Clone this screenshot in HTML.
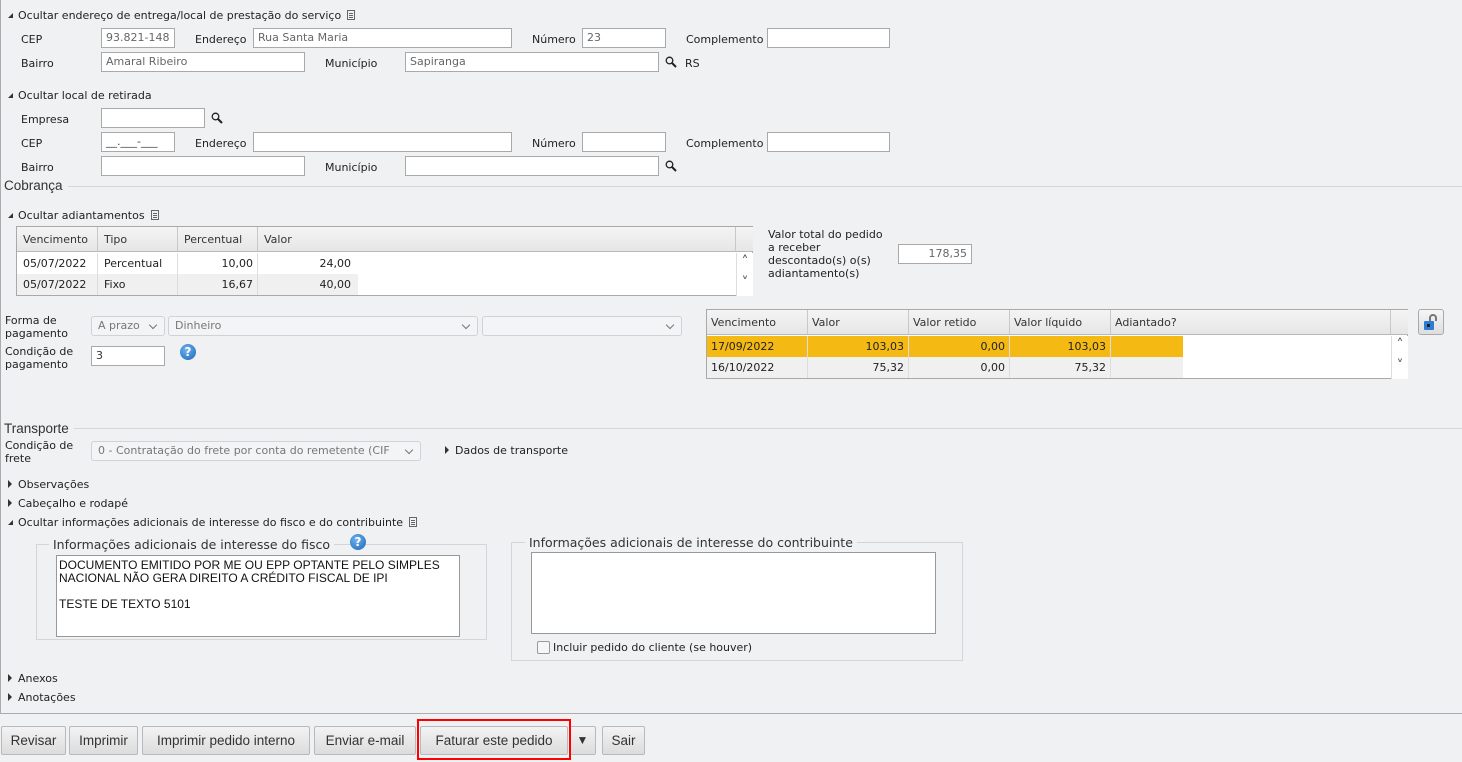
<!DOCTYPE html>
<html><head><meta charset="utf-8">
<style>
*{box-sizing:border-box}
body{margin:0;width:1462px;height:762px;background:#f0f1f3;font-family:"DejaVu Sans","Liberation Sans",sans-serif;font-size:11px;color:#222;position:relative;overflow:hidden}
.a{position:absolute;white-space:nowrap}
.in{position:absolute;height:20px;background:#fff;border:1px solid #a9a9a9;font-size:11px;color:#666;padding:1px 4px;line-height:16px}
.sel{position:absolute;height:20px;border:1px solid #cfd2d6;border-radius:3px;background:#f3f4f5;color:#777;padding:2px 6px;line-height:14px;overflow:hidden;white-space:nowrap}
.sel:after{content:"";position:absolute;right:8px;top:5px;width:5px;height:5px;border-right:1px solid #777;border-bottom:1px solid #777;transform:rotate(45deg);background:#f3f4f5}
.tri{display:inline-block;width:0;height:0;border-left:5px solid transparent;border-bottom:5px solid #333;margin-right:5px;vertical-align:1px}
.rt{display:inline-block;width:0;height:0;border-top:4px solid transparent;border-bottom:4px solid transparent;border-left:4px solid #333;margin-right:6px;vertical-align:0}
.doc{display:inline-block;width:8px;height:10px;border:1px solid #666;margin-left:6px;vertical-align:-1px;background:linear-gradient(#666,#666) 1px 2px/4px 1px no-repeat,linear-gradient(#666,#666) 1px 4px/4px 1px no-repeat,linear-gradient(#666,#666) 1px 6px/4px 1px no-repeat}
.mag{position:absolute;width:12px;height:12px}
.grid{position:absolute;border:1px solid #a9a9a9;background:#fff}
.hd{position:absolute;top:0;height:25px;background:linear-gradient(#f4f4f4,#e6e6e6);border-right:1px solid #c8c8c8;border-bottom:1px solid #b8b8b8;padding:6px 4px;color:#333}
.c{position:absolute;height:21px;padding:4px 4px;border-right:1px solid #ddd}
.r{text-align:right}
.btn{position:absolute;top:726px;height:29px;border:1px solid #b7b9bd;border-radius:2px;background:linear-gradient(#f3f3f3,#dcdcdc);font-family:"Liberation Sans",sans-serif;font-size:13.5px;color:#333;padding:6px 0;line-height:15px;white-space:nowrap;text-align:center}
.hr{position:absolute;height:1px;background:#d5d7da}
.q{position:absolute;width:16px;height:16px;border-radius:50%;background:radial-gradient(circle at 40% 35%,#6fb2ee,#1b65b8);color:#fff;font-weight:bold;font-size:12px;text-align:center;line-height:16px}
.fs{position:absolute;border:1px solid #d3d5d8}
.ta{position:absolute;background:#fff;border:1px solid #999;font-family:"Liberation Sans",sans-serif;font-size:12px;color:#111;padding:3px 2px;line-height:13px}
.sb{position:absolute;width:17px;height:43px;border-left:1px solid #ddd;background:#fff;font-size:14px;color:#555;text-align:center}
</style></head><body>
<div class="a" style="left:0;top:0;width:1px;height:714px;background:#a9adb3"></div>
<div class="a" style="left:0;top:713px;width:1462px;height:1px;background:#a9adb3"></div>

<div class="a" style="left:8px;top:9px"><span class="tri"></span>Ocultar endereço de entrega/local de prestação do serviço<span class="doc"></span></div>
<div class="a" style="left:21px;top:33px">CEP</div><div class="in" style="left:101px;top:28px;width:74px">93.821-148</div>
<div class="a" style="left:195px;top:33px">Endereço</div><div class="in" style="left:253px;top:28px;width:259px">Rua Santa Maria</div>
<div class="a" style="left:532px;top:33px">Número</div><div class="in" style="left:582px;top:28px;width:84px">23</div>
<div class="a" style="left:686px;top:33px">Complemento</div><div class="in" style="left:767px;top:28px;width:123px"></div>
<div class="a" style="left:21px;top:57px">Bairro</div><div class="in" style="left:101px;top:52px;width:204px">Amaral Ribeiro</div>
<div class="a" style="left:325px;top:57px">Município</div><div class="in" style="left:405px;top:52px;width:254px">Sapiranga</div>
<svg class="mag" style="left:665px;top:56px" viewBox="0 0 12 12"><circle cx="4.5" cy="4.5" r="3.3" fill="none" stroke="#222" stroke-width="1.3"/><path d="M7 7l4 4" stroke="#222" stroke-width="2"/></svg>
<div class="a" style="left:685px;top:57px">RS</div>

<div class="a" style="left:8px;top:89px"><span class="tri"></span>Ocultar local de retirada</div>
<div class="a" style="left:21px;top:113px">Empresa</div><div class="in" style="left:101px;top:108px;width:104px"></div>
<svg class="mag" style="left:211px;top:112px" viewBox="0 0 12 12"><circle cx="4.5" cy="4.5" r="3.3" fill="none" stroke="#222" stroke-width="1.3"/><path d="M7 7l4 4" stroke="#222" stroke-width="2"/></svg>
<div class="a" style="left:21px;top:137px">CEP</div><div class="in" style="left:101px;top:132px;width:74px;color:#444">__.___-___</div>
<div class="a" style="left:195px;top:137px">Endereço</div><div class="in" style="left:253px;top:132px;width:259px"></div>
<div class="a" style="left:532px;top:137px">Número</div><div class="in" style="left:582px;top:132px;width:84px"></div>
<div class="a" style="left:686px;top:137px">Complemento</div><div class="in" style="left:767px;top:132px;width:123px"></div>
<div class="a" style="left:21px;top:161px">Bairro</div><div class="in" style="left:101px;top:156px;width:204px"></div>
<div class="a" style="left:325px;top:161px">Município</div><div class="in" style="left:405px;top:156px;width:254px"></div>
<svg class="mag" style="left:665px;top:160px" viewBox="0 0 12 12"><circle cx="4.5" cy="4.5" r="3.3" fill="none" stroke="#222" stroke-width="1.3"/><path d="M7 7l4 4" stroke="#222" stroke-width="2"/></svg>

<div class="a" style="left:4px;top:178px;font-family:'Liberation Sans',sans-serif;font-size:13.5px;color:#333">Cobrança</div>
<div class="hr" style="left:68px;top:186px;width:1394px"></div>

<div class="a" style="left:8px;top:209px"><span class="tri"></span>Ocultar adiantamentos<span class="doc"></span></div>
<div class="grid" style="left:16px;top:226px;width:737px;height:70px">
<div class="hd" style="left:0;width:81px;padding-left:6px">Vencimento</div>
<div class="hd" style="left:81px;width:80px;padding-left:6px">Tipo</div>
<div class="hd" style="left:161px;width:80px;padding-left:6px">Percentual</div>
<div class="hd" style="left:241px;width:478px;padding-left:6px">Valor</div>
<div class="hd" style="left:719px;width:17px;border-right:0"></div>
<div class="c" style="left:0;top:26px;width:81px;padding-left:6px">05/07/2022</div>
<div class="c" style="left:81px;top:26px;width:80px;padding-left:6px">Percentual</div>
<div class="c r" style="left:161px;top:26px;width:80px">10,00</div>
<div class="c r" style="left:241px;top:26px;width:100px;border:0;padding-right:7px">24,00</div>
<div class="c" style="left:0;top:47px;width:81px;background:#f0f0f0;padding-left:6px">05/07/2022</div>
<div class="c" style="left:81px;top:47px;width:80px;background:#f0f0f0;padding-left:6px">Fixo</div>
<div class="c r" style="left:161px;top:47px;width:80px;background:#f0f0f0">16,67</div>
<div class="c r" style="left:241px;top:47px;width:100px;background:#f0f0f0;border:0;padding-right:7px">40,00</div>
<div class="sb" style="left:719px;top:26px"><div style="position:absolute;top:1px;width:16px">&#708;</div><div style="position:absolute;top:22px;width:16px">&#709;</div></div>
</div>

<div class="a" style="left:768px;top:228px;line-height:13px">Valor total do pedido<br>a receber<br>descontado(s) o(s)<br>adiantamento(s)</div>
<div class="in" style="left:898px;top:244px;width:74px;text-align:right">178,35</div>

<div class="a" style="left:5px;top:314px;line-height:13px">Forma de<br>pagamento</div>
<div class="sel" style="left:91px;top:316px;width:74px">A prazo</div>
<div class="sel" style="left:168px;top:316px;width:310px">Dinheiro</div>
<div class="sel" style="left:482px;top:316px;width:200px"></div>
<div class="a" style="left:5px;top:345px;line-height:13px">Condição de<br>pagamento</div>
<div class="in" style="left:91px;top:346px;width:74px;color:#333">3</div>
<div class="q" style="left:180px;top:344px">?</div>

<div class="grid" style="left:706px;top:309px;width:702px;height:70px">
<div class="hd" style="left:0;width:101px">Vencimento</div>
<div class="hd" style="left:101px;width:101px">Valor</div>
<div class="hd" style="left:202px;width:101px">Valor retido</div>
<div class="hd" style="left:303px;width:101px">Valor líquido</div>
<div class="hd" style="left:404px;width:280px">Adiantado?</div>
<div class="hd" style="left:684px;width:17px;border-right:0"></div>
<div class="c" style="left:0;top:26px;width:101px;background:#f5b914">17/09/2022</div>
<div class="c r" style="left:101px;top:26px;width:101px;background:#f5b914">103,03</div>
<div class="c r" style="left:202px;top:26px;width:101px;background:#f5b914">0,00</div>
<div class="c r" style="left:303px;top:26px;width:101px;background:#f5b914">103,03</div>
<div class="c" style="left:404px;top:26px;width:72px;background:#f5b914;border:0"></div>
<div class="c" style="left:0;top:47px;width:101px;background:#f0f0f0">16/10/2022</div>
<div class="c r" style="left:101px;top:47px;width:101px;background:#f0f0f0">75,32</div>
<div class="c r" style="left:202px;top:47px;width:101px;background:#f0f0f0">0,00</div>
<div class="c r" style="left:303px;top:47px;width:101px;background:#f0f0f0">75,32</div>
<div class="c" style="left:404px;top:47px;width:72px;background:#f0f0f0;border:0"></div>
<div class="sb" style="left:684px;top:26px"><div style="position:absolute;top:1px;width:16px">&#708;</div><div style="position:absolute;top:22px;width:16px">&#709;</div></div>
</div>
<div class="a" style="left:1418px;top:309px;width:26px;height:26px;border:1px solid #aaa;border-radius:3px;background:linear-gradient(#f6f6f6,#dedede)">
<svg width="24" height="24" viewBox="0 0 24 24"><path d="M11 12V8a3 3 0 0 1 6 0v3" fill="none" stroke="#777" stroke-width="2"/><rect x="5" y="11" width="10" height="9" rx="1" fill="#2e7bd0"/><rect x="8" y="14" width="3" height="3" fill="#123"/></svg></div>

<div class="a" style="left:4px;top:421px;font-family:'Liberation Sans',sans-serif;font-size:13.5px;color:#333">Transporte</div>
<div class="hr" style="left:74px;top:428px;width:1388px"></div>
<div class="a" style="left:5px;top:439px;line-height:13px">Condição de<br>frete</div>
<div class="sel" style="left:91px;top:441px;width:330px;padding-right:20px">0 - Contratação do frete por conta do remetente (CIF</div>
<div class="a" style="left:445px;top:444px"><span class="rt"></span>Dados de transporte</div>

<div class="a" style="left:8px;top:478px"><span class="rt"></span>Observações</div>
<div class="a" style="left:8px;top:497px"><span class="rt"></span>Cabeçalho e rodapé</div>
<div class="a" style="left:8px;top:516px"><span class="tri"></span>Ocultar informações adicionais de interesse do fisco e do contribuinte<span class="doc"></span></div>

<div class="fs" style="left:36px;top:544px;width:451px;height:96px"></div>
<div class="a" style="left:49px;top:537px;background:#f0f1f3;padding:0 4px;font-size:12.5px;color:#333">Informações adicionais de interesse do fisco</div>
<div class="q" style="left:350px;top:534px">?</div>
<div class="ta" style="left:56px;top:555px;width:404px;height:82px">DOCUMENTO EMITIDO POR ME OU EPP OPTANTE PELO SIMPLES<br>NACIONAL NÃO GERA DIREITO A CRÉDITO FISCAL DE IPI<br><br>TESTE DE TEXTO 5101</div>

<div class="fs" style="left:511px;top:542px;width:452px;height:119px"></div>
<div class="a" style="left:525px;top:535px;background:#f0f1f3;padding:0 4px;font-size:12.5px;color:#333">Informações adicionais de interesse do contribuinte</div>
<div class="ta" style="left:531px;top:552px;width:405px;height:82px"></div>
<div class="a" style="left:537px;top:641px;width:13px;height:13px;border:1px solid #999;background:#f6f6f6;border-radius:2px"></div>
<div class="a" style="left:553px;top:641px">Incluir pedido do cliente (se houver)</div>

<div class="a" style="left:8px;top:672px"><span class="rt"></span>Anexos</div>
<div class="a" style="left:8px;top:691px"><span class="rt"></span>Anotações</div>

<div class="btn" style="left:1px;width:65px">Revisar</div>
<div class="btn" style="left:69px;width:69px">Imprimir</div>
<div class="btn" style="left:142px;width:168px">Imprimir pedido interno</div>
<div class="btn" style="left:314px;width:102px">Enviar e-mail</div>
<div class="btn" style="left:420px;width:148px">Faturar este pedido</div>
<div class="btn" style="left:569px;width:27px;font-size:12px">&#9660;</div>
<div class="btn" style="left:602px;width:43px">Sair</div>
<div class="a" style="left:417px;top:719px;width:154px;height:41px;border:2px solid #f00"></div>
</body></html>
